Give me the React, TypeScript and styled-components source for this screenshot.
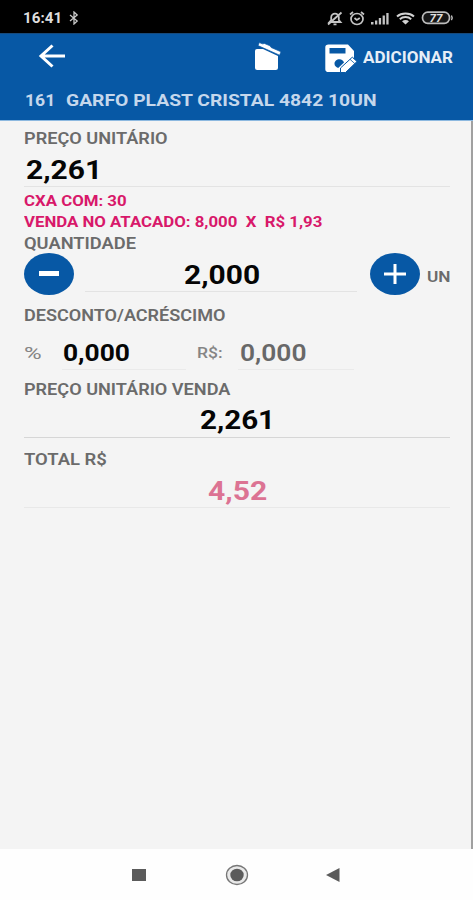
import React, { useLayoutEffect, useRef, useState } from 'react';
import styled, { createGlobalStyle } from 'styled-components';

const GlobalStyle = createGlobalStyle`
  * { box-sizing: border-box; }
  body { margin: 0; background: #fff; font-family: Roboto, sans-serif; }
`;

const Screen = styled.div`
  width: 473px;
  height: 900px;
  display: flex;
  flex-direction: column;
  overflow: hidden;
  background: #fefefe;
`;

const TextBox = styled.span<{ $width: number; $size: number; $color: string; $weight: number }>`
  display: block;
  flex: none;
  width: ${(p) => p.$width}px;
  font-family: Roboto, sans-serif;
  font-size: ${(p) => p.$size}px;
  font-weight: ${(p) => p.$weight};
  color: ${(p) => p.$color};
  line-height: 20px;
  text-align: left;
  white-space: pre;
`;

const Stretch = styled.span`
  display: inline-block;
  vertical-align: top;
  transform-origin: 0 50%;
`;

type WideTextProps = { width: number; size: number; color: string; weight?: number; children: string };

/* Text stretched horizontally until it fills the given width. */
function WideText({ width, size, color, weight = 700, children }: WideTextProps) {
  const ref = useRef<HTMLSpanElement>(null);
  const [scale, setScale] = useState(1);
  useLayoutEffect(() => {
    if (ref.current) setScale(width / ref.current.offsetWidth);
  }, [width, size, weight, children]);
  return (
    <TextBox $width={width} $size={size} $color={color} $weight={weight}>
      <Stretch ref={ref} style={{ transform: `scaleX(${scale})` }}>{children}</Stretch>
    </TextBox>
  );
}

const StatusBar = styled.div`
  height: 33px;
  flex: none;
  display: flex;
  align-items: center;
  padding: 3px 19px 0 23px;
  background: #000;
`;

const Spacer = styled.div`
  flex: 1;
`;

const Icon = styled.svg<{ $gap?: number }>`
  display: block;
  flex: none;
  margin-left: ${(p) => p.$gap ?? 0}px;
`;

const Header = styled.header`
  height: 88px;
  flex: none;
  background: #0758a5;
  border-top: 1px solid #174a7c;
  border-bottom: 1px solid #8db9e0;
`;

const Toolbar = styled.div`
  height: 46px;
  display: flex;
  align-items: center;
  padding: 0 20px 2px 38px;
`;

const BarButton = styled.button<{ $gap?: number; $drop?: number }>`
  display: flex;
  align-items: center;
  flex: none;
  gap: 5px;
  margin: ${(p) => p.$drop ?? 0}px 0 0 ${(p) => p.$gap ?? 0}px;
  padding: 0;
  border: 0;
  background: none;
`;

const ProductLine = styled.div`
  height: 40px;
  display: flex;
  align-items: center;
  gap: 11px;
  padding-left: 25px;
`;

const Form = styled.main`
  flex: 1;
  padding: 4px 22px 0 24px;
  background: #f4f4f4;
  border-right: 2px solid #a0a0a0;
`;

const Row = styled.div<{ $height: number; $top?: number; $gap?: number }>`
  height: ${(p) => p.$height}px;
  margin-top: ${(p) => p.$top ?? 0}px;
  margin-left: ${(p) => p.$gap ?? 0}px;
  display: flex;
  align-items: center;
`;

const Field = styled.div<{ $line: string; $width?: number; $height: number; $align?: string; $pad?: number; $gap?: number; $drop?: number; $top?: number }>`
  width: ${(p) => (p.$width ? `${p.$width}px` : '426px')};
  height: ${(p) => p.$height}px;
  margin-left: ${(p) => p.$gap ?? 0}px;
  margin-top: ${(p) => p.$top ?? 0}px;
  flex: none;
  display: flex;
  align-items: center;
  justify-content: ${(p) => p.$align ?? 'flex-start'};
  padding-left: ${(p) => p.$pad ?? 0}px;
  padding-top: ${(p) => p.$drop ?? 0}px;
  border-bottom: 1px solid ${(p) => p.$line};
`;

const RoundButton = styled.button<{ $gap?: number }>`
  width: 50px;
  height: 42px;
  margin: 0 0 0 ${(p) => p.$gap ?? 0}px;
  padding: 0;
  flex: none;
  display: flex;
  align-items: center;
  justify-content: center;
  border: 0;
  border-radius: 50%;
  background: #0758a5;
`;

const UnitSlot = styled.div`
  margin: 5px 0 0 7px;
`;

const NavBar = styled.nav`
  height: 51px;
  flex: none;
  display: flex;
  align-items: center;
  padding-left: 131px;
`;

const GREY = '#6b6b6b';
const PINK = '#d8186a';

export default function App() {
  return (
    <>
      <GlobalStyle />
      <Screen>
        <StatusBar>
          <WideText width={39} size={14} color="#dedede">16:41</WideText>
          <Icon $gap={7} width="10" height="14" viewBox="0 0 10 14" fill="none" stroke="#c8c8c8" strokeWidth="1.3">
            <path d="M1 4l7.2 6L5 13V1l3.2 3L1 10" />
          </Icon>
          <Spacer />
          <Icon width="16" height="15" viewBox="0 0 16 15" fill="none" stroke="#c4c4c4" strokeWidth="1.8">
            <path d="M2.500 11h11l-1.700-2V6.200C11.800 4 10 2.600 8 2.600S4.200 4 4.200 6.200V9L2.500 11z" />
            <path d="M6.500 13.300h3M1 13.500L14.500 1.500" />
          </Icon>
          <Icon $gap={6} width="16" height="15" viewBox="0 0 16 15" fill="none" stroke="#c4c4c4" strokeWidth="1.700">
            <ellipse cx="8" cy="8" rx="6" ry="5.500" />
            <path d="M1 3.500L4 1M15 3.500L12 1M5.500 7l2.300 2 3-2" />
          </Icon>
          <Icon $gap={6} width="18" height="13" viewBox="0 0 18 13" fill="#c4c4c4">
            <path d="M0 10h2.500v2.500H0zM4 8.500h2.300v4H4zM7.800 6h2.300v6.500H7.800zM11.600 3.500h2.300v9h-2.300zM15.300 1h2.300v11.500h-2.300z" />
          </Icon>
          <Icon $gap={7} width="19" height="13" viewBox="0 0 19 13" fill="none" stroke="#d2d2d2" strokeWidth="2">
            <path d="M1 4.500C5.500.5 13.500.5 18 4.500M3.800 7.200c3.200-2.800 8.200-2.800 11.400 0" />
            <path d="M6 9.300c2-1.700 5-1.700 7 0l-3.500 3.200z" fill="#d2d2d2" stroke="none" />
          </Icon>
          <Icon $gap={6} width="33" height="14" viewBox="0 0 33 14">
            <rect x="1.500" y="1.200" width="27" height="11.200" rx="5.300" fill="#161616" stroke="#bcbcbc" strokeWidth="1.700" />
            <path d="M30.400 4.500q1.500 2.300 0 4.600" fill="none" stroke="#bcbcbc" strokeWidth="1.400" />
            <text x="8.500" y="10.600" fontFamily="Roboto" fontWeight="700" fontStyle="italic" fontSize="10.500" textLength="13" lengthAdjust="spacingAndGlyphs" fill="#e0e0e0">77</text>
          </Icon>
        </StatusBar>

        <Header>
          <Toolbar>
            <BarButton aria-label="Voltar">
              <Icon width="28" height="24" viewBox="0 0 28 24" fill="none" stroke="#fff" strokeWidth="3">
                <path d="M27 12H3M14.500 1.500L3 12l11.500 10.500" />
              </Icon>
            </BarButton>
            <Spacer />
            <BarButton aria-label="Excluir">
              <Icon width="28" height="30" viewBox="0 0 28 30" fill="#fff">
                <path d="M1 10q0-2 2-2h6l15 7v12q0 2-2.200 2H3.200Q1 29 1 27z" />
                <path d="M4 4.600L5.300 1.600l3.200 1.200 2-.3 5.500 2.300 1.200 1.700 9.800 4.300-1.400 3.400z" stroke="#0758a5" strokeWidth=".7" />
              </Icon>
            </BarButton>
            <BarButton $gap={43} $drop={3}>
              <Icon width="33" height="30" viewBox="0 0 33 30" fill="#fff">
                <path fillRule="evenodd" d="M3.500 1.500h19.500L29 8v6.500l-13 12V29H3.500Q.3 29 .3 26.200V4.300Q.3 1.500 3.500 1.500zM4.500 5v5.500h16V5zM14.500 16.300c-2.800 0-5 2-5 4.400 0 2 1.500 3.600 3.700 4.200l5.800-5.400c-.5-1.900-2.300-3.200-4.500-3.200z" />
                <path d="M15.500 25L27.300 14.200l4.700 4.300L20.500 29.500h-5z" stroke="#0758a5" strokeWidth="1" />
                <path d="M25 16.300l4.800 4.300" stroke="#0758a5" strokeWidth=".8" />
              </Icon>
              <WideText width={90} size={16.3} color="#e6eef7">ADICIONAR</WideText>
            </BarButton>
          </Toolbar>
          <ProductLine>
            <WideText width={30} size={17} color="#c5d7ec">161</WideText>
            <WideText width={311} size={17} color="#c5d7ec">GARFO PLAST CRISTAL 4842 10UN</WideText>
          </ProductLine>
        </Header>

        <Form>
          <Row $height={28}><WideText width={144} size={16} weight={600} color={GREY}>PREÇO UNITÁRIO</WideText></Row>
          <Field $line="#e3e3e3" $height={34} $pad={2}>
            <WideText width={76} size={26} color="#050505">2,261</WideText>
          </Field>
          <Row $height={21} $top={3}><WideText width={103} size={15.5} color={PINK}>CXA COM: 30</WideText></Row>
          <Row $height={21}><WideText width={298} size={15.5} color={PINK}>{'VENDA NO ATACADO: 8,000  X  R$ 1,93'}</WideText></Row>
          <Row $height={19} $top={2}><WideText width={112} size={16} weight={600} color={GREY}>QUANTIDADE</WideText></Row>

          <Row $height={42}>
            <RoundButton aria-label="Diminuir">
              <Icon width="20" height="6" viewBox="0 0 20 6"><path d="M0 0h20v5H0z" fill="#fff" /></Icon>
            </RoundButton>
            <Field $line="#e3e3e3" $height={35} $width={272} $align="center" $gap={11} $top={0} $drop={2} $pad={1}>
              <WideText width={76} size={26} color="#050505">2,000</WideText>
            </Field>
            <RoundButton $gap={13} aria-label="Aumentar">
              <Icon width="22" height="20" viewBox="0 0 22 20" stroke="#fff" strokeWidth="3"><path d="M0 10h22M11 0v20" /></Icon>
            </RoundButton>
            <UnitSlot><WideText width={23} size={15} weight={600} color={GREY}>UN</WideText></UnitSlot>
          </Row>

          <Row $height={22} $top={10}><WideText width={202} size={16} weight={600} color={GREY}>DESCONTO/ACRÉSCIMO</WideText></Row>
          <Row $height={34} $top={9}>
            <WideText width={17} size={17} weight={400} color="#858585">%</WideText>
            <Field $line="#eaeaea" $height={34} $width={124} $gap={21} $pad={1}>
              <WideText width={67} size={24} color="#050505">0,000</WideText>
            </Field>
            <Row $height={34} $gap={11}>
              <WideText width={26} size={15.5} weight={500} color="#858585">R$:</WideText>
            </Row>
            <Field $line="#eaeaea" $height={34} $width={116} $gap={15} $pad={2}>
              <WideText width={66} size={24} weight={600} color="#686868">0,000</WideText>
            </Field>
          </Row>

          <Row $height={22} $top={9}><WideText width={206} size={16} weight={600} color={GREY}>PREÇO UNITÁRIO VENDA</WideText></Row>
          <Field $line="#d6d6d6" $height={36} $top={1} $align="center">
            <WideText width={75} size={26} color="#050505">2,261</WideText>
          </Field>
          <Row $height={22} $top={11}><WideText width={83} size={16} weight={600} color={GREY}>TOTAL R$</WideText></Row>
          <Field $line="#e8e8e8" $height={34} $top={3} $align="center">
            <WideText width={59} size={26} color="#dc7393">4,52</WideText>
          </Field>
        </Form>

        <NavBar>
          <Icon width="16" height="14" viewBox="0 0 16 14"><path d="M1 1h14v12H1z" fill="#5b5b5b" /></Icon>
          <Icon $gap={78} width="24" height="22" viewBox="0 0 24 22">
            <ellipse cx="12" cy="11" rx="10.500" ry="9.500" fill="#e9e9e9" stroke="#777" strokeWidth="1.300" />
            <ellipse cx="12" cy="11" rx="6.700" ry="6.300" fill="#5b5b5b" />
          </Icon>
          <Icon $gap={76} width="16" height="16" viewBox="0 0 16 16"><path d="M1 8l13.500-7v14z" fill="#5b5b5b" /></Icon>
        </NavBar>
      </Screen>
    </>
  );
}
